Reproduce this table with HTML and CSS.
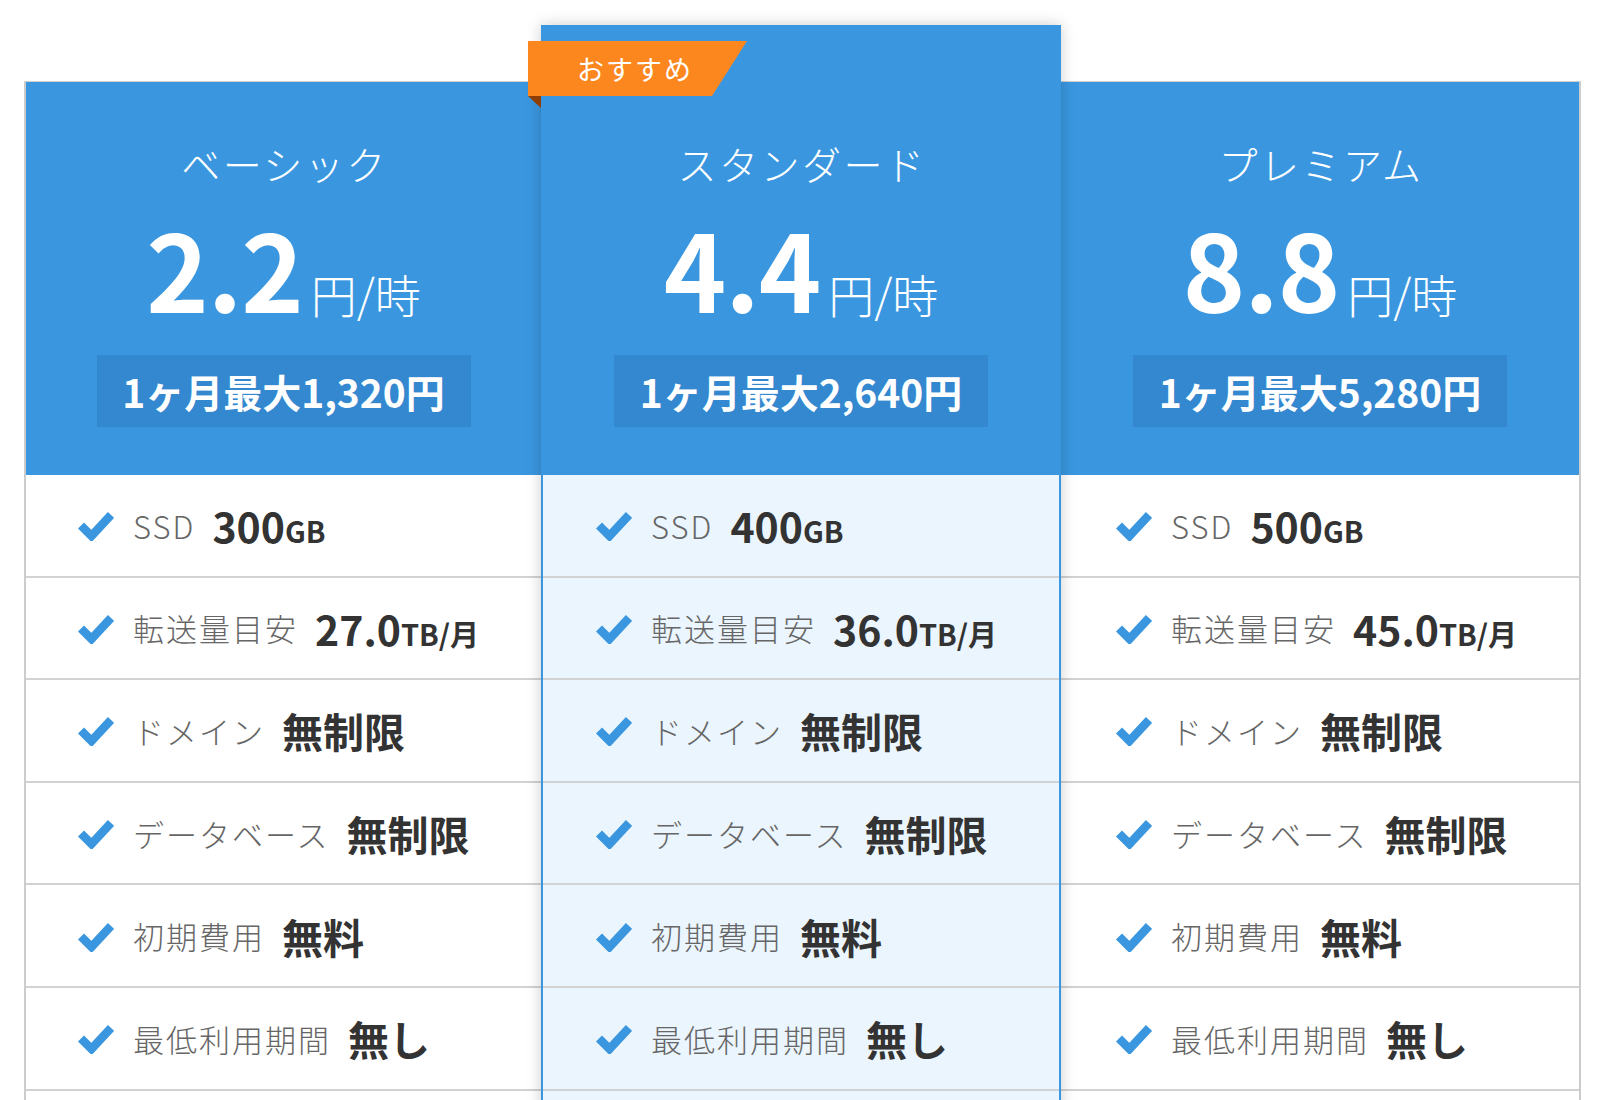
FILE: index.html
```html
<!DOCTYPE html>
<html lang="ja">
<head>
<meta charset="utf-8">
<title>料金プラン</title>
<link rel="stylesheet" href="styles.css">
</head>
<body>
<svg width="0" height="0" class="defs">
  <defs>
    <symbol id="chk" viewBox="0 0 36 32">
      <path d="M3 16.5 L13.5 27 L33 6" fill="none" stroke="currentColor" stroke-width="8.5" stroke-linejoin="miter" stroke-linecap="butt"/>
    </symbol>
  </defs>
</svg>
<div class="plans">
  <section class="plan plan-side plan-left">
    <div class="plan-head">
      <h2 class="plan-name">ベーシック</h2>
      <p class="plan-price"><span class="num">2.2</span><span class="unit">円/時</span></p>
      <p class="plan-month">1ヶ月最大1,320円</p>
    </div>
    <ul class="features">
      <li><svg class="chk"><use href="#chk"/></svg><span class="label">SSD</span><span class="value">300<small>GB</small></span></li>
      <li><svg class="chk"><use href="#chk"/></svg><span class="label">転送量目安</span><span class="value">27.0<small>TB/月</small></span></li>
      <li><svg class="chk"><use href="#chk"/></svg><span class="label">ドメイン</span><span class="value">無制限</span></li>
      <li><svg class="chk"><use href="#chk"/></svg><span class="label">データベース</span><span class="value">無制限</span></li>
      <li><svg class="chk"><use href="#chk"/></svg><span class="label">初期費用</span><span class="value">無料</span></li>
      <li><svg class="chk"><use href="#chk"/></svg><span class="label">最低利用期間</span><span class="value">無し</span></li>
      <li class="empty"></li>
    </ul>
  </section>
  <section class="plan plan-featured">
    <div class="ribbon">おすすめ</div>
    <div class="plan-head">
      <h2 class="plan-name">スタンダード</h2>
      <p class="plan-price"><span class="num">4.4</span><span class="unit">円/時</span></p>
      <p class="plan-month">1ヶ月最大2,640円</p>
    </div>
    <ul class="features">
      <li><svg class="chk"><use href="#chk"/></svg><span class="label">SSD</span><span class="value">400<small>GB</small></span></li>
      <li><svg class="chk"><use href="#chk"/></svg><span class="label">転送量目安</span><span class="value">36.0<small>TB/月</small></span></li>
      <li><svg class="chk"><use href="#chk"/></svg><span class="label">ドメイン</span><span class="value">無制限</span></li>
      <li><svg class="chk"><use href="#chk"/></svg><span class="label">データベース</span><span class="value">無制限</span></li>
      <li><svg class="chk"><use href="#chk"/></svg><span class="label">初期費用</span><span class="value">無料</span></li>
      <li><svg class="chk"><use href="#chk"/></svg><span class="label">最低利用期間</span><span class="value">無し</span></li>
      <li class="empty"></li>
    </ul>
  </section>
  <section class="plan plan-side plan-right">
    <div class="plan-head">
      <h2 class="plan-name">プレミアム</h2>
      <p class="plan-price"><span class="num">8.8</span><span class="unit">円/時</span></p>
      <p class="plan-month">1ヶ月最大5,280円</p>
    </div>
    <ul class="features">
      <li><svg class="chk"><use href="#chk"/></svg><span class="label">SSD</span><span class="value">500<small>GB</small></span></li>
      <li><svg class="chk"><use href="#chk"/></svg><span class="label">転送量目安</span><span class="value">45.0<small>TB/月</small></span></li>
      <li><svg class="chk"><use href="#chk"/></svg><span class="label">ドメイン</span><span class="value">無制限</span></li>
      <li><svg class="chk"><use href="#chk"/></svg><span class="label">データベース</span><span class="value">無制限</span></li>
      <li><svg class="chk"><use href="#chk"/></svg><span class="label">初期費用</span><span class="value">無料</span></li>
      <li><svg class="chk"><use href="#chk"/></svg><span class="label">最低利用期間</span><span class="value">無し</span></li>
      <li class="empty"></li>
    </ul>
  </section>
</div>
</body>
</html>
```

FILE: styles.css
```css
html, body {
  margin: 0;
  padding: 0;
  background: #ffffff;
  overflow: hidden;
}

body {
  font-family: "Noto Sans CJK JP", "Noto Sans", sans-serif;
  color: #333333;
  height: 1100px;
}

.defs {
  position: absolute;
  width: 0;
  height: 0;
}

.plans {
  display: grid;
  grid-template-columns: 517px 520px 520px;
  align-items: start;
  padding: 25px 0 0 24px;
}

.plan {
  position: relative;
  background: #ffffff;
}

.plan-side {
  margin-top: 56px;
  border-top: 1px solid #d0d0d0;
}

.plan-left {
  border-left: 2px solid #cccccc;
}

.plan-right {
  border-right: 2px solid #cccccc;
}

.plan-featured {
  z-index: 2;
  background: #ebf5fd;
  border-left: 2px solid #3a97df;
  border-right: 2px solid #3a97df;
  box-shadow: 0 0 14px rgba(0, 0, 0, 0.2);
}

.plan-head {
  background: #3a97df;
  color: #ffffff;
  text-align: center;
  padding: 59px 0 48px;
}

.plan-featured .plan-head {
  padding-top: 116px;
}

.plan-name {
  margin: 0;
  font-size: 39px;
  line-height: 44px;
  font-weight: 300;
  letter-spacing: 2.5px;
  padding-left: 2px;
}

.plan-price {
  margin: 26px 0 0;
  height: 112px;
  line-height: 112px;
  white-space: nowrap;
}

.plan-price .num {
  font-size: 106px;
  font-weight: 700;
  letter-spacing: -1px;
}

.plan-price .unit {
  font-size: 46px;
  font-weight: 300;
  margin-left: 8px;
}

.plan-month {
  width: 374px;
  height: 72px;
  margin: 32px auto 0;
  background: #3388d0;
  font-size: 39px;
  line-height: 72px;
  font-weight: 700;
  white-space: nowrap;
}

.features {
  list-style: none;
  margin: 0;
  padding: 0;
}

.features li {
  box-sizing: border-box;
  height: 102.6px;
  border-bottom: 2px solid #d2d2d2;
  display: flex;
  align-items: center;
  padding-left: 52px;
  white-space: nowrap;
}

.plan-featured .features li {
  padding-left: 53px;
}

.plan-right .features li {
  padding-left: 55px;
}

.chk {
  width: 36px;
  height: 32px;
  color: #3a97df;
  flex: none;
  margin-right: 19px;
}

.label {
  font-size: 31px;
  color: #666666;
  font-weight: 300;
  letter-spacing: 2px;
  margin-right: 17px;
}

.value {
  font-size: 41px;
  font-weight: 700;
  color: #333333;
}

.value small {
  font-size: 29px;
  font-weight: 700;
}

.ribbon {
  position: absolute;
  left: -15px;
  top: 16px;
  width: 219px;
  height: 55px;
  box-sizing: border-box;
  padding-left: 49px;
  background: #fc871f;
  color: #ffffff;
  font-size: 27px;
  line-height: 55px;
  letter-spacing: 2px;
  clip-path: polygon(0 0, 100% 0, calc(100% - 35px) 100%, 0 100%);
  z-index: 3;
}

.plan-featured::before {
  content: "";
  position: absolute;
  left: -15px;
  top: 71px;
  width: 0;
  height: 0;
  border-top: 12px solid #8f3f05;
  border-left: 13px solid transparent;
  z-index: 3;
}
```
